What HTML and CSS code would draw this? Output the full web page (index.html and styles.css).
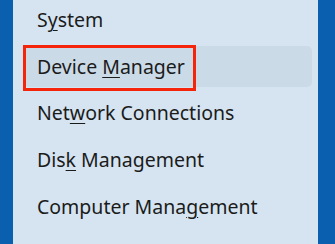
FILE: index.html
```html
<!DOCTYPE html>
<html>
<head>
	<title>Quick Link Menu</title>
	<meta charset="utf-8">
	<link rel="stylesheet" href="styles.css">
</head>
<body>
	<section id="desktop">
		<div class="edge left"></div>

		<div class="menu">
			<div class="item">S<u>y</u>stem</div>
			<div class="item hover">Device <u>M</u>anager<span class="callout"></span></div>
			<div class="item">Net<u>w</u>ork Connections</div>
			<div class="item">Dis<u>k</u> Management</div>
			<div class="item">Computer Mana<u>g</u>ement</div>
		</div>

		<div class="edge right"></div>
	</section>
</body>
</html>
```

FILE: styles.css
```css
html, body {
	height: 100%;
	margin: 0;
	padding: 0;
}

body {
	font-family: "Noto Sans", "Open Sans", sans-serif;
	overflow: hidden;
}

#desktop {
	display: flex;
	height: 100%;
	background-color: #0a5fae;
}

.edge.left { width: 13px; }
.edge.right { width: 17px; }

.menu {
	flex: 1;
	display: flex;
	flex-direction: column;
	gap: 5.7px;
	margin-top: -1px;
	padding: 0 6px 0 11px;
	background-color: #d5e4f0;
}

.item {
	position: relative;
	flex-shrink: 0;
	height: 41px;
	line-height: 41px;
	padding-left: 13px;
	border-radius: 5px;
	font-size: 19.5px;
	color: #1b1b1b;
	white-space: nowrap;
}

.item u {
	text-underline-offset: 3px;
	text-decoration-thickness: 1px;
}

.item.hover {
	background-color: #cbdae7;
}

/* red annotation box drawn on top of the hovered row */
.callout {
	position: absolute;
	left: -1px;
	top: -1px;
	width: 173px;
	height: 46px;
	box-sizing: border-box;
	border: 3px solid #f5250c;
}
```
